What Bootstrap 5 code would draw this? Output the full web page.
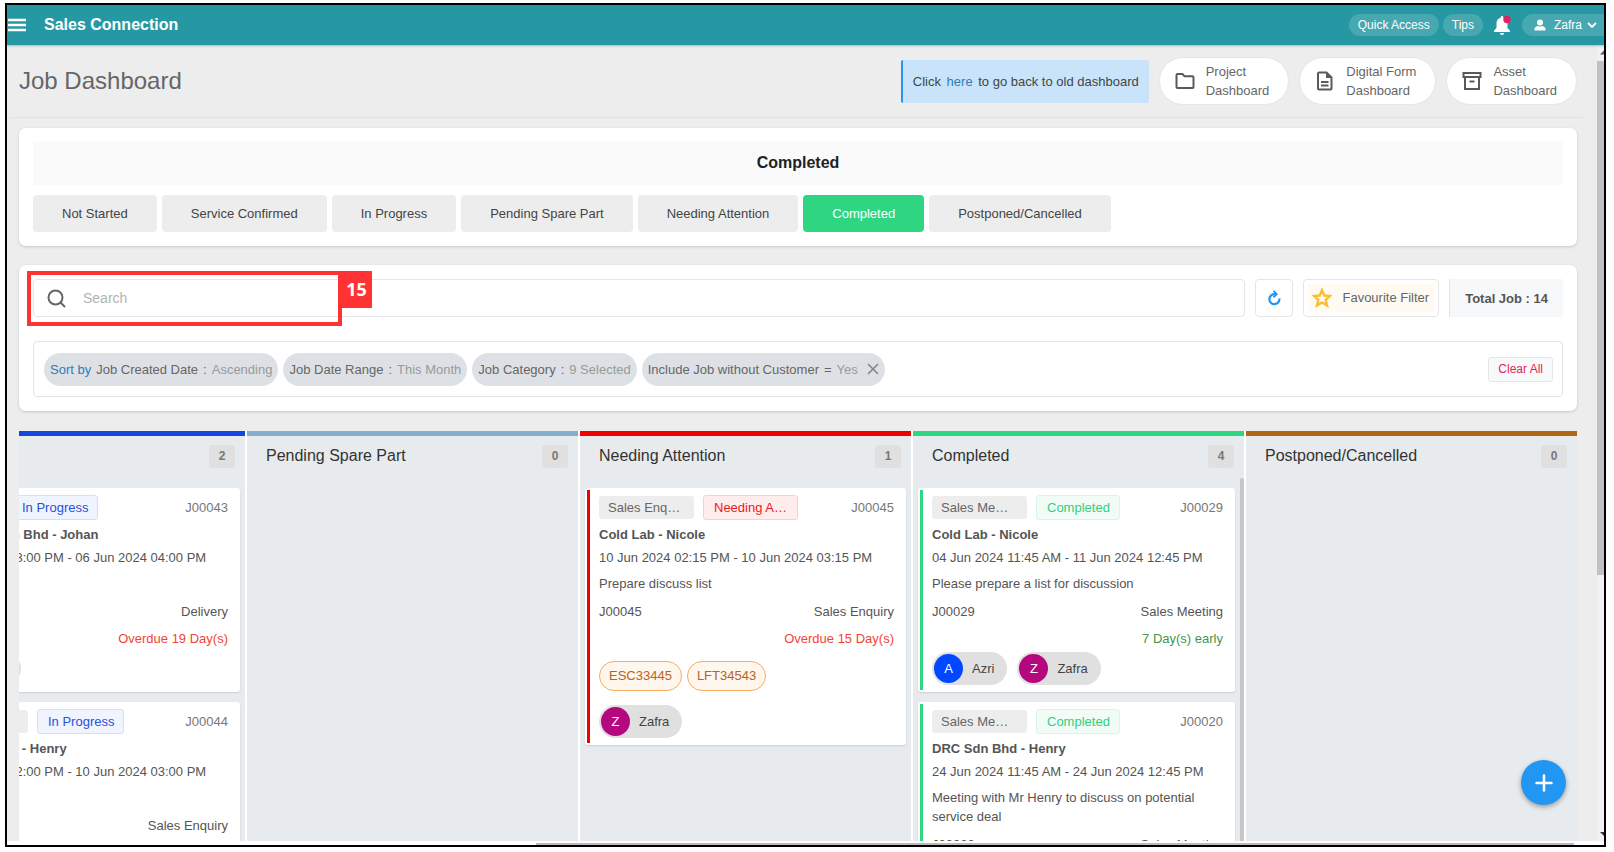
<!DOCTYPE html>
<html lang="en">
<head>
<meta charset="utf-8">
<meta name="viewport" content="width=device-width, initial-scale=1">
<title>Job Dashboard</title>
<link rel="stylesheet" href="https://cdn.jsdelivr.net/npm/bootstrap@5.3.0/dist/css/bootstrap.min.css">
<script src="https://cdn.jsdelivr.net/npm/bootstrap@5.3.0/dist/js/bootstrap.bundle.min.js"></script>
<style>
  body { font-family: "Liberation Sans", Arial, sans-serif; font-size: 13px; line-height: 24px; color: #555; background: #fff; height: 100vh; padding: 3px 8px 5px 5px; overflow: hidden; }
  button, input { font: inherit; color: inherit; }
  a { color: #337ab7; text-decoration: none; }
  .app-frame { border: 2px solid #000; background: #ededed; }
  .top-bar { height: 40px; background: #2698a3; box-shadow: 0 1px 2px rgba(0,0,0,.25); color: #fff; z-index: 1; }
  .menu-btn { width: 37px; }
  .brand-name { font-size: 16px; font-weight: 700; color: #fff; }
  .nav-pill { height: 22px; border-radius: 11px; background: rgba(255,255,255,.16); border: 0; color: #fff; font-size: 12px; line-height: 21px; padding: 0 9px; }
  .nav-user { border-radius: 11px 0 0 11px; padding: 0 6px 0 12px; }
  .work-area, .work-main { min-width: 0; min-height: 0; }
  .page-head { height: 73px; margin: 0 14px 0 3px; padding: 0 6px 0 9px; border-bottom: 1px solid #e2e2e2; gap: 10px; }
  .page-head h1 { font-size: 24px; color: #666; font-weight: 400; }
  .old-note { height: 43px; line-height: 43px; padding: 0 10px; background: #c9e4fa; border-left: 2px solid #2196f3; border-radius: 2px; color: #444; }
  .old-note a { margin: 0 2px; }
  .dash-link { height: 48px; border-radius: 24px; background: #fff; border: 1px solid #e6e6e6; padding: 0 19px 0 15px; gap: 11px; line-height: 19px; color: #666; }
  .panel { margin: 0 20px 0 12px; background: #fff; border-radius: 7px; box-shadow: 0 1px 3px rgba(0,0,0,.16); padding: 14px; }
  .stage-panel { margin-top: 10px; }
  .filter-panel { margin-top: 19px; }
  .stage-title { height: 43px; line-height: 42px; background: #fafafa; font-size: 16px; font-weight: 700; color: #222; margin: 0 0 10px; }
  .stage-list { gap: 5px; }
  .stage-btn { height: 37px; border: 0; border-radius: 4px; background: #ededed; color: #444; padding: 0 29px; }
  .stage-btn.active { background: #2fd682; color: #fff; }
  .boxed { height: 38px; border: 1px solid #e6e6e6; border-radius: 4px; background: #fff; }
  .search-row { gap: 10px; }
  .refresh-btn { width: 38px; }
  .search-field { padding: 0 13px; gap: 17px; }
  .search-field input { border: 0; outline: 0; padding: 0; font-size: 14px; background: transparent; }
  .search-field input::placeholder { color: #b4b4b4; opacity: 1; }
  .fav-inner { height: 28px; background: #fffbf2; padding: 0 5px 0 4px; gap: 10px; color: #666; }
  .total-box { height: 38px; line-height: 39px; background: #f7f8fa; border-left: 1px solid #dee2e6; padding: 0 15px; font-weight: 700; }
  .filter-box { height: 56px; border: 1px solid #e4e4e4; border-radius: 4px; padding: 0 9px 0 10px; margin-top: 24px; gap: 5px; }
  .chip { height: 33px; line-height: 33px; border-radius: 17px; background: #dde1e5; padding: 0 6px; gap: 5px; color: #666; }
  .chip span { color: #999; }
  .clear-btn { height: 25px; line-height: 23px; border: 1px solid #e6e6e6; border-radius: 3px; background: #f8f9fa; color: #e91e4f; font-size: 12px; padding: 0 9px; }
  .callout-box { left: 8px; top: 6px; width: 315px; height: 55px; border: 4px solid #f33; pointer-events: none; }
  .callout-num { left: 100%; top: -4px; margin-left: 3px; width: 31px; height: 37px; background: #f33; color: #fff; font: 700 18px/37px "Noto Sans", sans-serif; }
  .board { margin: 20px 20px 0 12px; gap: 2px; background: #fff; min-height: 0; }
  .lane { flex: 0 0 331px; background: #e7ebee; border-top: 5px solid var(--tone); }
  .lane-head { height: 40px; padding: 0 10px 0 19px; margin-bottom: 12px; }
  .lane-head h2 { font-size: 16px; font-weight: 400; color: #333; }
  .lane-count { width: 26px; height: 23px; line-height: 23px; background: #e0e0e0; border-radius: 3px; font-size: 12px; font-weight: 700; color: #777; }
  .lane-cards { margin: 0 5px; gap: 10px; }
  .lane-scroll { margin-right: 9px; }
  .lane-thumb { right: 0; top: 42px; bottom: 0; width: 4px; background: #c6c6c6; border-radius: 2px 2px 0 0; }
  .job { flex: none; background: #fff; border-radius: 3px; box-shadow: 0 1px 2px rgba(0,0,0,.12); padding: 7px 12px 7px 14px; color: #555; }
  .job::before { content: ""; position: absolute; left: 2px; top: 2px; bottom: 2px; width: 3px; background: var(--tone); }
  .job h3 { font-size: 13px; line-height: 23px; font-weight: 700; margin: 3px 0 0; }
  .job-tags { gap: 9px; }
  .job-tag { height: 23px; line-height: 23px; max-width: 95px; padding: 0 13px 0 9px; background: #ededed; border-radius: 3px; color: #666; }
  .job-state { height: 25px; line-height: 23px; max-width: 95px; padding: 0 9px 0 10px; border: 1px solid; border-radius: 3px; }
  .state-blue { color: #2a52d6; background: #eff4ff; border-color: #d3dffb; }
  .state-red { color: #e91c1c; background: #ffecec; border-color: #fbcfcf; }
  .state-green { color: #38cc7f; background: #f1fcf6; border-color: #d9f5e6; }
  .job-no { color: #777; }
  .job-desc { line-height: 19px; margin: 4px 0 7px; }
  .job-due { margin-top: 3px; }
  .late { color: #f44336; }
  .early { color: #43964a; }
  .asset { height: 30px; line-height: 28px; border: 1px solid #f5ad62; border-radius: 15px; background: #fff6ee; color: #b5651d; padding: 0 9px; }
  .assets { gap: 5px; margin: 10px 0 14px; }
  .people { gap: 10px; margin-top: 1px; }
  .person { height: 33px; border-radius: 17px; background: #e0e0e0; padding: 0 13px 0 2px; gap: 9px; color: #444; }
  .face { width: 29px; height: 29px; line-height: 29px; border-radius: 50%; color: #fff; }
  .face-blue { background: #0048ff; }
  .face-pink { background: #b5087f; }
  .add-btn { right: 38px; bottom: 40px; width: 45px; height: 45px; border: 0; border-radius: 50%; background: #2196f3; box-shadow: 0 2px 5px rgba(0,0,0,.35); z-index: 2; }
  .page-scroll { width: 7px; background: #f1f1f1; }
  .page-thumb { height: 514px; background: #c1c1c1; margin-top: 3px; }
  .x-scroll { height: 4px; background: #fff; }
  .x-thumb { height: 2px; width: 65%; margin: 2px 30px 0 auto; background: #bbb; }
</style>
</head>
<body>
<div class="app-frame h-100 d-flex flex-column overflow-hidden position-relative">
  <nav class="top-bar d-flex align-items-center flex-shrink-0">
    <button class="menu-btn btn p-0 border-0 d-flex" aria-label="Menu">
      <svg width="20" height="16" viewBox="0 0 20 16" stroke="#fff" stroke-width="2.300"><path d="M1 3h18M1 8h18M1 13h18"/></svg>
    </button>
    <a class="brand-name" href="#">Sales Connection</a>
    <div class="ms-auto d-flex align-items-center">
      <button class="nav-pill me-1">Quick Access</button>
      <button class="nav-pill">Tips</button>
      <button class="btn p-0 border-0 d-flex mx-2" aria-label="Notifications">
        <svg width="23" height="22" viewBox="0 0 23 22"><path fill="#fff" d="M11 2c-.8 0-1.300.5-1.300 1.200v.6C7 4.400 5.500 6.500 5.500 9.200V14L3 16.800V18h16v-1.200L16.500 14V9.200c0-2.700-1.500-4.800-4.200-5.400v-.6C12.300 2.500 11.800 2 11 2zM9 19a2 2 0 0 0 4 0z"/><circle cx="16" cy="5.500" r="3.700" fill="#e91e63"/></svg>
      </button>
      <button class="nav-pill nav-user d-flex align-items-center">
        <svg width="12" height="12" viewBox="0 0 12 12" fill="#fff"><circle cx="6" cy="3.500" r="3"/><path d="M.5 11.500V9.700C.5 8.200 2.500 7.200 4 6.900c1 .8 3 .8 4 0 1.500.3 3.500 1.300 3.500 2.800v1.800z"/></svg>
        <span class="ms-2 me-1">Zafra</span>
        <svg width="12" height="12" viewBox="0 0 12 12" fill="none" stroke="#fff" stroke-width="1.900"><path d="M2 4l4 4 4-4"/></svg>
      </button>
    </div>
  </nav>
  <div class="work-area d-flex flex-grow-1">
    <main class="work-main flex-grow-1 d-flex flex-column">
      <header class="page-head d-flex align-items-center flex-shrink-0">
        <h1 class="m-0 me-auto">Job Dashboard</h1>
        <div class="old-note">Click <a href="#">here</a> to go back to old dashboard</div>
        <a class="dash-link d-flex align-items-center" href="#">
          <svg width="20" height="20" viewBox="0 0 20 20" fill="none" stroke="#5a5a5a" stroke-width="2"><path d="M1.500 4q0-1 1-1h5l2 2.300h8q1 0 1 1V16q0 1-1 1h-15q-1 0-1-1z"/></svg>
          <span>Project<br>Dashboard</span></a>
        <a class="dash-link d-flex align-items-center" href="#">
          <svg width="20" height="20" viewBox="0 0 20 20" fill="none" stroke="#5a5a5a" stroke-width="2"><path d="M4 1.500h7.500l5 5v11q0 1-1 1H4q-1 0-1-1v-15q0-1 1-1zM6 11h7.500M6 14.500h7.500"/><path d="M11 1.500v5.500h5.500z" fill="#5a5a5a" stroke="none"/></svg>
          <span>Digital Form<br>Dashboard</span></a>
        <a class="dash-link d-flex align-items-center" href="#">
          <svg width="20" height="20" viewBox="0 0 20 20" fill="none" stroke="#5a5a5a" stroke-width="2"><path d="M1.500 2h17v4h-17zM3 6v12h14V6M7.500 10.500h5"/></svg>
          <span>Asset<br>Dashboard</span></a>
      </header>

      <section class="panel stage-panel flex-shrink-0">
        <h2 class="stage-title text-center">Completed</h2>
        <div class="stage-list d-flex">
          <button class="stage-btn">Not Started</button>
          <button class="stage-btn">Service Confirmed</button>
          <button class="stage-btn">In Progress</button>
          <button class="stage-btn">Pending Spare Part</button>
          <button class="stage-btn">Needing Attention</button>
          <button class="stage-btn active">Completed</button>
          <button class="stage-btn">Postponed/Cancelled</button>
        </div>
      </section>

      <section class="panel filter-panel flex-shrink-0 position-relative">
        <div class="search-row d-flex">
          <label class="boxed search-field d-flex align-items-center flex-grow-1">
            <svg width="19" height="19" viewBox="0 0 19 19" fill="none" stroke="#666" stroke-width="2"><circle cx="8.500" cy="8.500" r="7"/><path d="M13.500 13.500l4.500 4.500"/></svg>
            <input class="flex-grow-1" type="text" placeholder="Search" aria-label="Search">
          </label>
          <button class="boxed refresh-btn d-flex align-items-center justify-content-center p-0" aria-label="Refresh">
            <svg width="16" height="16" viewBox="0 0 16 16" fill="none" stroke="#2196f3" stroke-width="2.200"><path d="M9.500 4.200H8A5 5 0 1 0 13.300 8.500"/><path d="M7.500 .8l3.200 3.400L7.500 7.200" stroke-width="1.900"/></svg>
          </button>
          <button class="boxed px-1">
            <span class="fav-inner d-flex align-items-center">
              <svg width="20" height="20" viewBox="0 0 20 20" fill="none" stroke="#fbc02d" stroke-width="2.400"><path d="M10 2.200l2.300 5.300 5.700.5-4.300 3.800 1.300 5.600-5-3-5 3 1.300-5.600L2 8l5.700-.5z"/></svg>
              Favourite Filter</span>
          </button>
          <div class="total-box">Total Job : 14</div>
        </div>
        <div class="filter-box d-flex align-items-center">
          <div class="chip d-flex"><a href="#">Sort by</a>Job Created Date<b class="fw-normal">:</b><span>Ascending</span></div>
          <div class="chip d-flex">Job Date Range<b class="fw-normal">:</b><span>This Month</span></div>
          <div class="chip d-flex">Job Category<b class="fw-normal">:</b><span>9 Selected</span></div>
          <div class="chip d-flex">Include Job without Customer<b class="fw-normal">=</b><span>Yes</span>
            <button class="btn p-0 border-0 d-flex align-items-center ms-1" aria-label="Remove filter"><svg width="12" height="12" viewBox="0 0 12 12" stroke="#888" stroke-width="1.700"><path d="M1 1l10 10M11 1L1 11"/></svg></button></div>
          <button class="clear-btn ms-auto">Clear All</button>
        </div>
        <div class="callout-box position-absolute"><span class="callout-num position-absolute text-center">15</span></div>
      </section>

      <div class="board d-flex justify-content-end flex-grow-1 overflow-hidden">
        <section class="lane" style="--tone:#1447e0">
          <div class="lane-head d-flex align-items-center justify-content-between"><h2 class="m-0">In Progress</h2><span class="lane-count text-center">2</span></div>
          <div class="lane-cards d-flex flex-column">
            <article class="job position-relative">
              <div class="job-tags d-flex align-items-center"><span class="job-tag text-truncate">Delivery</span><span class="job-state state-blue text-truncate">In Progress</span><span class="job-no ms-auto">J00043</span></div>
              <h3>Prestige1 Sdn Bhd - Johan</h3>
              <div>06 Jun 2024 03:00 PM - 06 Jun 2024 04:00 PM</div>
              <p class="job-desc">Deliver</p>
              <div class="d-flex justify-content-between"><span>J00043</span><span>Delivery</span></div>
              <div class="job-due late text-end">Overdue 19 Day(s)</div>
              <div class="people d-flex"><span class="person d-flex align-items-center"><span class="face face-blue text-center">J</span>Johan</span></div>
            </article>
            <article class="job position-relative">
              <div class="job-tags d-flex align-items-center"><span class="job-tag text-truncate">Sales Enquiry</span><span class="job-state state-blue text-truncate">In Progress</span><span class="job-no ms-auto">J00044</span></div>
              <h3>DRC Sdn Bhd - Henry</h3>
              <div>10 Jun 2024 02:00 PM - 10 Jun 2024 03:00 PM</div>
              <p class="job-desc">Enquiry</p>
              <div class="d-flex justify-content-between"><span>J00044</span><span>Sales Enquiry</span></div>
            </article>
          </div>
        </section>
        <section class="lane" style="--tone:#84aecd">
          <div class="lane-head d-flex align-items-center justify-content-between"><h2 class="m-0">Pending Spare Part</h2><span class="lane-count text-center">0</span></div>
        </section>
        <section class="lane" style="--tone:#f00000">
          <div class="lane-head d-flex align-items-center justify-content-between"><h2 class="m-0">Needing Attention</h2><span class="lane-count text-center">1</span></div>
          <div class="lane-cards d-flex flex-column">
            <article class="job position-relative">
              <div class="job-tags d-flex align-items-center"><span class="job-tag text-truncate">Sales Enquiry</span><span class="job-state state-red text-truncate">Needing Attention</span><span class="job-no ms-auto">J00045</span></div>
              <h3>Cold Lab - Nicole</h3>
              <div>10 Jun 2024 02:15 PM - 10 Jun 2024 03:15 PM</div>
              <p class="job-desc">Prepare discuss list</p>
              <div class="d-flex justify-content-between"><span>J00045</span><span>Sales Enquiry</span></div>
              <div class="job-due late text-end">Overdue 15 Day(s)</div>
              <div class="assets d-flex"><span class="asset">ESC33445</span><span class="asset">LFT34543</span></div>
              <div class="people d-flex"><span class="person d-flex align-items-center"><span class="face face-pink text-center">Z</span>Zafra</span></div>
            </article>
          </div>
        </section>
        <section class="lane position-relative" style="--tone:#2fd682">
          <div class="lane-head d-flex align-items-center justify-content-between"><h2 class="m-0">Completed</h2><span class="lane-count text-center">4</span></div>
          <div class="lane-cards lane-scroll d-flex flex-column">
            <article class="job position-relative">
              <div class="job-tags d-flex align-items-center"><span class="job-tag text-truncate">Sales Meeting</span><span class="job-state state-green text-truncate">Completed</span><span class="job-no ms-auto">J00029</span></div>
              <h3>Cold Lab - Nicole</h3>
              <div>04 Jun 2024 11:45 AM - 11 Jun 2024 12:45 PM</div>
              <p class="job-desc">Please prepare a list for discussion</p>
              <div class="d-flex justify-content-between"><span>J00029</span><span>Sales Meeting</span></div>
              <div class="job-due early text-end">7 Day(s) early</div>
              <div class="people d-flex"><span class="person d-flex align-items-center"><span class="face face-blue text-center">A</span>Azri</span><span class="person d-flex align-items-center"><span class="face face-pink text-center">Z</span>Zafra</span></div>
            </article>
            <article class="job position-relative">
              <div class="job-tags d-flex align-items-center"><span class="job-tag text-truncate">Sales Meeting</span><span class="job-state state-green text-truncate">Completed</span><span class="job-no ms-auto">J00020</span></div>
              <h3>DRC Sdn Bhd - Henry</h3>
              <div>24 Jun 2024 11:45 AM - 24 Jun 2024 12:45 PM</div>
              <p class="job-desc">Meeting with Mr Henry to discuss on potential service deal</p>
              <div class="d-flex justify-content-between"><span>J00020</span><span>Sales Meeting</span></div>
            </article>
          </div>
          <div class="lane-thumb position-absolute"></div>
        </section>
        <section class="lane" style="--tone:#b06612">
          <div class="lane-head d-flex align-items-center justify-content-between"><h2 class="m-0">Postponed/Cancelled</h2><span class="lane-count text-center">0</span></div>
        </section>
      </div>
    </main>
    <div class="page-scroll d-flex flex-column flex-shrink-0">
      <svg class="flex-shrink-0" width="7" height="13" viewBox="0 0 7 13" fill="#555"><path d="M3 9.500l4-4v4z"/></svg>
      <div class="page-thumb"></div>
      <svg class="mt-auto" width="7" height="12" viewBox="0 0 7 12" fill="#333"><path d="M3 3h4v4z"/></svg>
    </div>
  </div>
  <div class="x-scroll flex-shrink-0 overflow-hidden"><div class="x-thumb"></div></div>
  <button class="add-btn position-absolute d-flex align-items-center justify-content-center p-0" aria-label="Add job">
    <svg width="18" height="18" viewBox="0 0 18 18" stroke="#fff" stroke-width="2.500" stroke-linecap="round"><path d="M9 1.500v15M1.500 9h15"/></svg>
  </button>
</div>
</body>
</html>
